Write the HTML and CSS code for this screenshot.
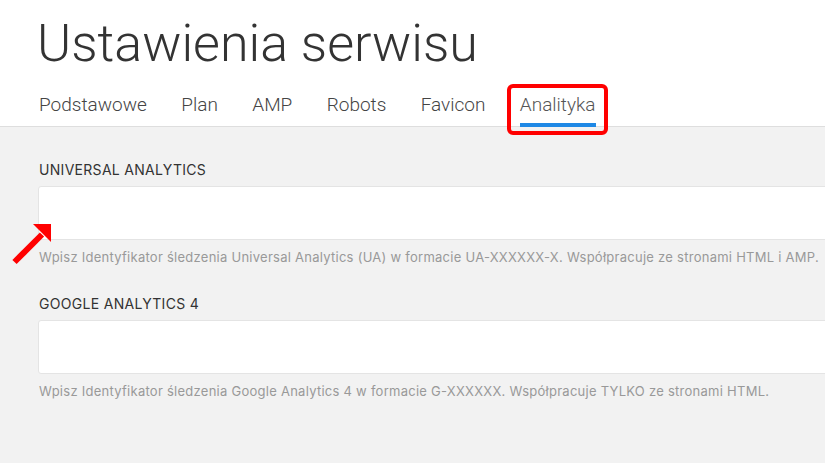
FILE: index.html
```html
<!DOCTYPE html>
<html lang="pl">
<head>
<meta charset="utf-8">
<title>Ustawienia serwisu</title>
<link rel="stylesheet" href="styles.css">
</head>
<body>
<header class="header">
  <h1 class="title">Ustawienia serwisu</h1>
  <nav class="tabs">
    <a class="tab">Podstawowe</a>
    <a class="tab">Plan</a>
    <a class="tab">AMP</a>
    <a class="tab">Robots</a>
    <a class="tab">Favicon</a>
    <a class="tab tab-active">Analityka<span class="highlight-box"></span></a>
  </nav>
</header>
<main class="content">
  <div class="field">
    <label class="field-label">UNIVERSAL ANALYTICS</label>
    <div class="input"></div>
    <p class="help">Wpisz Identyfikator śledzenia Universal Analytics (UA) w formacie UA-XXXXXX-X. Współpracuje ze stronami HTML i AMP.</p>
  </div>
  <div class="field">
    <label class="field-label">GOOGLE ANALYTICS 4</label>
    <div class="input"></div>
    <p class="help">Wpisz Identyfikator śledzenia Google Analytics 4 w formacie G-XXXXXX. Współpracuje TYLKO ze stronami HTML.</p>
  </div>
  <svg class="arrow" width="60" height="60" viewBox="0 0 60 60">
    <line x1="14.5" y1="49" x2="42" y2="21.5" stroke="#ff0000" stroke-width="6"/>
    <polygon points="33,11 51,11 51,29" fill="#ff0000"/>
  </svg>
</main>
</body>
</html>
```
FILE: styles.css
```css
html, body {
  margin: 0;
  padding: 0;
  overflow: hidden;
}
body {
  width: 825px;
  height: 463px;
  background: #f2f2f2;
}
.header {
  background: #ffffff;
  padding: 18px 0 0 37px;
  border-bottom: 1px solid #dedede;
}
.title {
  margin: 0;
  font-family: Roboto, "Liberation Sans", sans-serif;
  font-weight: 300;
  font-size: 52px;
  line-height: 52px;
  color: #333333;
}
.tabs {
  display: flex;
  gap: 34.4px;
  margin-top: 25px;
  padding-left: 2px;
}
.tab {
  position: relative;
  font-family: Roboto, "Liberation Sans", sans-serif;
  font-weight: 300;
  font-size: 19px;
  line-height: 20px;
  color: #444444;
  padding-bottom: 8px;
  border-bottom: 4px solid transparent;
  margin-bottom: -1px;
}
.tab-active {
  border-bottom-color: #1e88e5;
  color: #555555;
}
.highlight-box {
  position: absolute;
  top: -11px;
  left: -13px;
  right: -12px;
  bottom: -12px;
  border: 4px solid #ff0000;
  border-radius: 6px;
}
.content {
  position: relative;
  padding: 33px 0 0 38px;
  font-family: Inter, "Noto Sans", sans-serif;
}
.field {
  display: flex;
  flex-direction: column;
  margin-bottom: 28px;
}
.field-label {
  font-size: 14px;
  line-height: 20px;
  letter-spacing: 0.3px;
  color: #333333;
  margin-left: 1px;
}
.input {
  margin-top: 6px;
  height: 52px;
  width: calc(100% + 20px);
  background: #ffffff;
  border: 1px solid #e4e4e4;
  border-radius: 3px;
}
.help {
  margin: 8px 0 0 1px;
  font-size: 13px;
  line-height: 18px;
  letter-spacing: 0.26px;
  color: #999999;
}
.arrow {
  position: absolute;
  left: 0;
  top: 86px;
}
```
